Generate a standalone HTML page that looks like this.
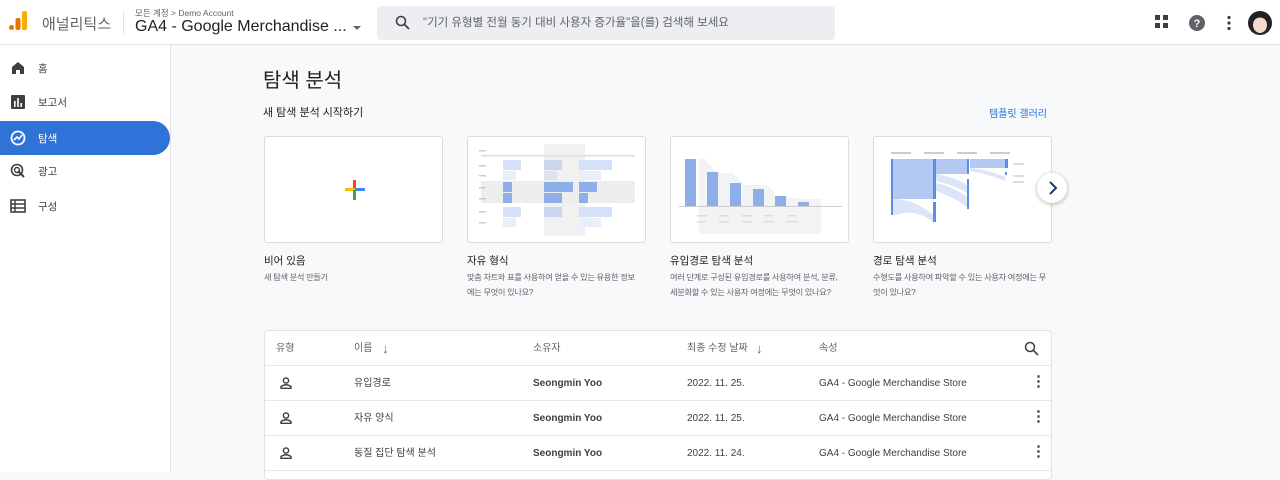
<!DOCTYPE html>
<html><head><meta charset="utf-8"><style>
*{box-sizing:border-box;margin:0;padding:0}
html,body{background:#f8f9fa}
body{width:1280px;height:472px;overflow:hidden;font-family:"Liberation Sans","Noto Sans CJK KR",sans-serif;color:#202124;position:relative}
.abs{position:absolute}
.hdr{left:0;top:0;width:1280px;height:45px;background:#fff;border-bottom:1px solid #e3e3e3}
.side{left:0;top:45px;width:171px;height:427px;background:#fff;border-right:1px solid #e3e3e3}
.nav{position:absolute;left:0;width:170px;height:35px;font-size:10.5px;color:#3c4043;display:flex;align-items:center;padding-left:38px}
.nav svg{position:absolute;left:10px;top:9px}
.card{position:absolute;top:136px;width:179px;height:107px;background:#fff;border:1px solid #dadce0;border-radius:3px;overflow:hidden}
.ct{position:absolute;top:253px;font-size:10.5px;color:#202124}
.cd{position:absolute;top:270px;font-size:8.2px;color:#5f6368;line-height:15px;width:182px;letter-spacing:-0.3px}
.tbl{left:264px;top:330px;width:788px;height:150px;background:#fff;border:1px solid #e3e3e3;border-radius:4px}
.row{position:absolute;left:0;width:786px;height:35px;border-bottom:1px solid #e8e8e8;font-size:10px;color:#3c4043}
.row span{position:absolute;top:11px;line-height:13px;height:13px}
</style></head><body>
<div class="abs hdr"></div>
<svg class="abs" style="left:9px;top:11px" width="20" height="22"><rect x="0" y="14" width="5" height="5" rx="2.5" fill="#e37400"/><rect x="6.5" y="7" width="5" height="12" rx="2" fill="#e37400"/><rect x="13" y="0" width="5" height="19" rx="2" fill="#f9ab00"/></svg>
<div class="abs" style="left:42px;top:13px;font-size:15px;color:#5f6368">애널리틱스</div>
<div class="abs" style="left:123px;top:11px;width:1px;height:24px;background:#e0e0e0"></div>
<div class="abs" style="left:135px;top:7px;font-size:8.5px;color:#5f6368">모든 계정 &gt; Demo Account</div>
<div class="abs" style="left:135px;top:18px;font-size:16px;color:#202124">GA4 - Google Merchandise ...</div>
<div class="abs" style="left:353px;top:26px;border:4px solid transparent;border-top:4px solid #5f6368"></div>
<div class="abs" style="left:377px;top:6px;width:458px;height:34px;background:#eceef1;border-radius:4px"></div>
<svg class="abs" style="left:395px;top:15px" width="16" height="16"><circle cx="6" cy="6" r="4.5" stroke="#3c4043" stroke-width="1.6" fill="none"/><path d="M9.5 9.5L14 14" stroke="#3c4043" stroke-width="1.8"/></svg>
<div class="abs" style="left:423px;top:14px;font-size:11.5px;color:#5f6368">"기기 유형별 전월 동기 대비 사용자 증가율"을(를) 검색해 보세요</div>
<svg class="abs" style="left:1155px;top:15px" width="14" height="14"><rect x="0" y="0" width="5" height="5" fill="#3c4043"/><rect x="8" y="0" width="5" height="5" fill="#3c4043"/><rect x="0" y="8" width="5" height="5" fill="#3c4043"/><rect x="8" y="8" width="5" height="5" fill="#3c4043"/></svg>
<svg class="abs" style="left:1188px;top:14px" width="18" height="18"><circle cx="9" cy="9" r="8" fill="#5f6368"/><text x="9" y="13" font-size="11" font-weight="bold" fill="#fff" text-anchor="middle" font-family="Liberation Sans">?</text></svg>
<svg class="abs" style="left:1226px;top:15px" width="6" height="16"><circle cx="3" cy="2.5" r="1.6" fill="#3c4043"/><circle cx="3" cy="8" r="1.6" fill="#3c4043"/><circle cx="3" cy="13.5" r="1.6" fill="#3c4043"/></svg>
<svg class="abs" style="left:1248px;top:11px" width="24" height="24"><circle cx="12" cy="12" r="12" fill="#202124"/><ellipse cx="12" cy="14" rx="7" ry="8" fill="#f1d9cc"/><path d="M4 11Q12 2 20 11L20 7Q12 0 4 7Z" fill="#202124"/></svg>

<div class="abs side">
<div class="nav" style="top:6px"><svg width="16" height="16"><path d="M2 7L8 2L14 7V14H10V10H6V14H2Z" fill="#3c4043"/></svg>홈</div>
<div class="nav" style="top:40px"><svg width="16" height="16"><rect x="1" y="1" width="14" height="14" rx="1" fill="#3c4043"/><rect x="4" y="7" width="1.6" height="6" fill="#fff"/><rect x="7.2" y="4" width="1.6" height="9" fill="#fff"/><rect x="10.4" y="9" width="1.6" height="4" fill="#fff"/></svg>보고서</div>
<div class="nav" style="top:76px;background:#2f73d8;color:#fff;border-radius:0 18px 18px 0;height:34px"><svg width="16" height="16"><circle cx="8" cy="8" r="6.5" stroke="#fff" stroke-width="1.8" fill="none"/><path d="M4 10L7 7L9 9L12 5" stroke="#fff" stroke-width="1.6" fill="none"/></svg>탐색</div>
<div class="nav" style="top:109px"><svg width="16" height="16"><circle cx="7" cy="7" r="5.5" stroke="#3c4043" stroke-width="1.6" fill="none"/><circle cx="7" cy="7" r="2.5" stroke="#3c4043" stroke-width="1.4" fill="none"/><path d="M8 8L14 14" stroke="#3c4043" stroke-width="2"/></svg>광고</div>
<div class="nav" style="top:144px"><svg width="16" height="16"><rect x="1" y="2" width="14" height="12" fill="none" stroke="#3c4043" stroke-width="1.6"/><path d="M1 6H15M1 10H15M5 2V14" stroke="#3c4043" stroke-width="1.4"/></svg>구성</div>
</div>

<div class="abs" style="left:263px;top:64px;font-size:20px">탐색 분석</div>
<div class="abs" style="left:263px;top:104px;font-size:11px">새 탐색 분석 시작하기</div>
<div class="abs" style="left:989px;top:105px;font-size:10px;color:#1a73e8">템플릿 갤러리</div>

<div class="card" style="left:264px"><svg style="position:absolute;left:78px;top:41px" width="24" height="24"><rect x="10" y="2" width="3" height="10" fill="#ea4335"/><rect x="2" y="10" width="10" height="3" fill="#fbbc04"/><rect x="12" y="10" width="10" height="3" fill="#4285f4"/><rect x="10" y="12" width="3" height="10" fill="#34a853"/></svg></div>
<div class="card" style="left:467px"><svg width="179" height="107">
<rect x="76" y="7" width="41" height="92" fill="#f1f1f1"/><rect x="13" y="18" width="154" height="1.5" fill="#ddd"/>
<rect x="13" y="44" width="154" height="22" fill="#eee"/>
<rect x="35" y="23" width="18" height="10" fill="#d4e1f8"/><rect x="76" y="23" width="18" height="10" fill="#cad6ee"/><rect x="111" y="23" width="33" height="10" fill="#d4e1f8"/>
<rect x="35" y="34" width="13" height="9" fill="#e8effb"/><rect x="76" y="34" width="13" height="9" fill="#dde3f0"/><rect x="111" y="34" width="22" height="9" fill="#e8effb"/>
<rect x="35" y="45" width="9" height="10" fill="#8daee9"/><rect x="76" y="45" width="29" height="10" fill="#8daee9"/><rect x="111" y="45" width="18" height="10" fill="#8daee9"/>
<rect x="35" y="56" width="9" height="10" fill="#8daee9"/><rect x="76" y="56" width="18" height="10" fill="#8daee9"/><rect x="111" y="56" width="9" height="10" fill="#8daee9"/>
<rect x="35" y="70" width="18" height="10" fill="#d4e1f8"/><rect x="76" y="70" width="18" height="10" fill="#cad6ee"/><rect x="111" y="70" width="33" height="10" fill="#d4e1f8"/>
<rect x="35" y="81" width="13" height="9" fill="#e8effb"/><rect x="111" y="81" width="22" height="9" fill="#e8effb"/>
<g fill="#ccc"><rect x="11" y="13" width="7" height="1.5"/><rect x="11" y="28" width="7" height="1.5"/><rect x="11" y="38" width="7" height="1.5"/><rect x="11" y="50" width="7" height="1.5"/><rect x="11" y="61" width="7" height="1.5"/><rect x="11" y="74" width="7" height="1.5"/><rect x="11" y="85" width="7" height="1.5"/></g>
</svg></div>
<div class="card" style="left:670px"><svg width="179" height="107">
<path d="M28 22H34L45 36H62L73 48H96L107 60H118L129 62H150V97H28Z" fill="#f3f3f3"/>
<g fill="#8daee9"><rect x="14" y="22" width="11" height="47"/><rect x="36" y="35" width="11" height="34"/><rect x="59" y="46" width="11" height="23"/><rect x="82" y="52" width="11" height="17"/><rect x="104" y="59" width="11" height="10"/><rect x="127" y="65" width="11" height="4"/></g>
<rect x="8" y="69" width="163" height="1" fill="#ccc"/>
<g fill="#ddd"><rect x="26" y="78" width="10" height="1.5"/><rect x="26" y="84" width="10" height="1.5"/><rect x="48" y="78" width="10" height="1.5"/><rect x="48" y="84" width="10" height="1.5"/><rect x="71" y="78" width="10" height="1.5"/><rect x="71" y="84" width="10" height="1.5"/><rect x="93" y="78" width="10" height="1.5"/><rect x="93" y="84" width="10" height="1.5"/><rect x="116" y="78" width="10" height="1.5"/><rect x="116" y="84" width="10" height="1.5"/></g>
</svg></div>
<div class="card" style="left:873px"><svg width="179" height="107">
<g fill="#ccc"><rect x="17" y="15" width="20" height="2"/><rect x="50" y="15" width="20" height="2"/><rect x="83" y="15" width="20" height="2"/><rect x="116" y="15" width="20" height="2"/></g>
<rect x="19" y="22" width="40" height="40" fill="#b3c9f1"/><path d="M19 62Q40 62 59 78V85Q40 70 19 79Z" fill="#dbe5f8"/>
<rect x="62" y="22" width="31" height="15" fill="#b3c9f1"/><path d="M62 37Q80 40 93 48V56Q80 48 62 44Z" fill="#dbe5f8"/><path d="M62 46Q80 50 93 60V70Q80 60 62 54Z" fill="#dbe5f8"/>
<rect x="96" y="22" width="35" height="9" fill="#b3c9f1"/><path d="M96 31Q115 33 131 40V44Q115 37 96 34Z" fill="#dbe5f8"/>
<g fill="#5b8de4"><rect x="17" y="22" width="2" height="56"/><rect x="59" y="22" width="3" height="40"/><rect x="59" y="65" width="3" height="20"/><rect x="93" y="22" width="2" height="15"/><rect x="93" y="42" width="2" height="30"/><rect x="131" y="22" width="3" height="9"/><rect x="131" y="35" width="2" height="3"/></g>
<g fill="#ddd"><rect x="139" y="26" width="11" height="2"/><rect x="139" y="38" width="11" height="2"/><rect x="139" y="44" width="11" height="2"/></g>
</svg></div>
<div class="abs" style="left:1037px;top:173px;width:30px;height:30px;border-radius:50%;background:#fff;box-shadow:0 1px 4px rgba(0,0,0,.3)"><svg width="30" height="30"><path d="M13 9L19 15L13 21" stroke="#1f3c70" stroke-width="2" fill="none"/></svg></div>

<div class="ct" style="left:264px">비어 있음</div><div class="cd" style="left:264px">새 탐색 분석 만들기</div>
<div class="ct" style="left:467px">자유 형식</div><div class="cd" style="left:467px">맞춤 차트와 표를 사용하여 얻을 수 있는 유용한 정보<br>에는 무엇이 있나요?</div>
<div class="ct" style="left:670px">유입경로 탐색 분석</div><div class="cd" style="left:670px">여러 단계로 구성된 유입경로를 사용하여 분석, 분류,<br>세분화할 수 있는 사용자 여정에는 무엇이 있나요?</div>
<div class="ct" style="left:873px">경로 탐색 분석</div><div class="cd" style="left:873px">수형도를 사용하여 파악할 수 있는 사용자 여정에는 무<br>엇이 있나요?</div>

<div class="abs tbl">
<div class="row" style="top:0;color:#5f6368"><span style="left:11px">유형</span><span style="left:89px">이름</span><span style="left:117px;font-size:13px">↓</span><span style="left:268px">소유자</span><span style="left:422px">최종 수정 날짜</span><span style="left:491px;font-size:13px">↓</span><span style="left:554px">속성</span>
<svg style="position:absolute;left:759px;top:10px" width="15" height="15"><circle cx="6" cy="6" r="4.5" stroke="#3c4043" stroke-width="1.5" fill="none"/><path d="M9.5 9.5L14 14" stroke="#3c4043" stroke-width="1.6"/></svg></div>
<div class="row" style="top:35px"><svg style="position:absolute;left:15px;top:11px" width="12" height="12"><circle cx="6" cy="3.5" r="2.6" stroke="#3c4043" stroke-width="1.4" fill="none"/><path d="M1 11.3V9.5Q6 6 11 9.5V11.3Z" stroke="#3c4043" stroke-width="1.4" fill="none"/></svg><span style="left:89px">유입경로</span><span style="left:268px;font-weight:bold">Seongmin Yoo</span><span style="left:422px">2022. 11. 25.</span><span style="left:554px">GA4 - Google Merchandise Store</span><span style="left:766px;font-weight:bold;top:8px;font-size:15px;line-height:15px;height:15px">⋮</span></div>
<div class="row" style="top:70px"><svg style="position:absolute;left:15px;top:11px" width="12" height="12"><circle cx="6" cy="3.5" r="2.6" stroke="#3c4043" stroke-width="1.4" fill="none"/><path d="M1 11.3V9.5Q6 6 11 9.5V11.3Z" stroke="#3c4043" stroke-width="1.4" fill="none"/></svg><span style="left:89px">자유 양식</span><span style="left:268px;font-weight:bold">Seongmin Yoo</span><span style="left:422px">2022. 11. 25.</span><span style="left:554px">GA4 - Google Merchandise Store</span><span style="left:766px;font-weight:bold;top:8px;font-size:15px;line-height:15px;height:15px">⋮</span></div>
<div class="row" style="top:105px"><svg style="position:absolute;left:15px;top:11px" width="12" height="12"><circle cx="6" cy="3.5" r="2.6" stroke="#3c4043" stroke-width="1.4" fill="none"/><path d="M1 11.3V9.5Q6 6 11 9.5V11.3Z" stroke="#3c4043" stroke-width="1.4" fill="none"/></svg><span style="left:89px">동질 집단 탐색 분석</span><span style="left:268px;font-weight:bold">Seongmin Yoo</span><span style="left:422px">2022. 11. 24.</span><span style="left:554px">GA4 - Google Merchandise Store</span><span style="left:766px;font-weight:bold;top:8px;font-size:15px;line-height:15px;height:15px">⋮</span></div>
</div>
</body></html>
